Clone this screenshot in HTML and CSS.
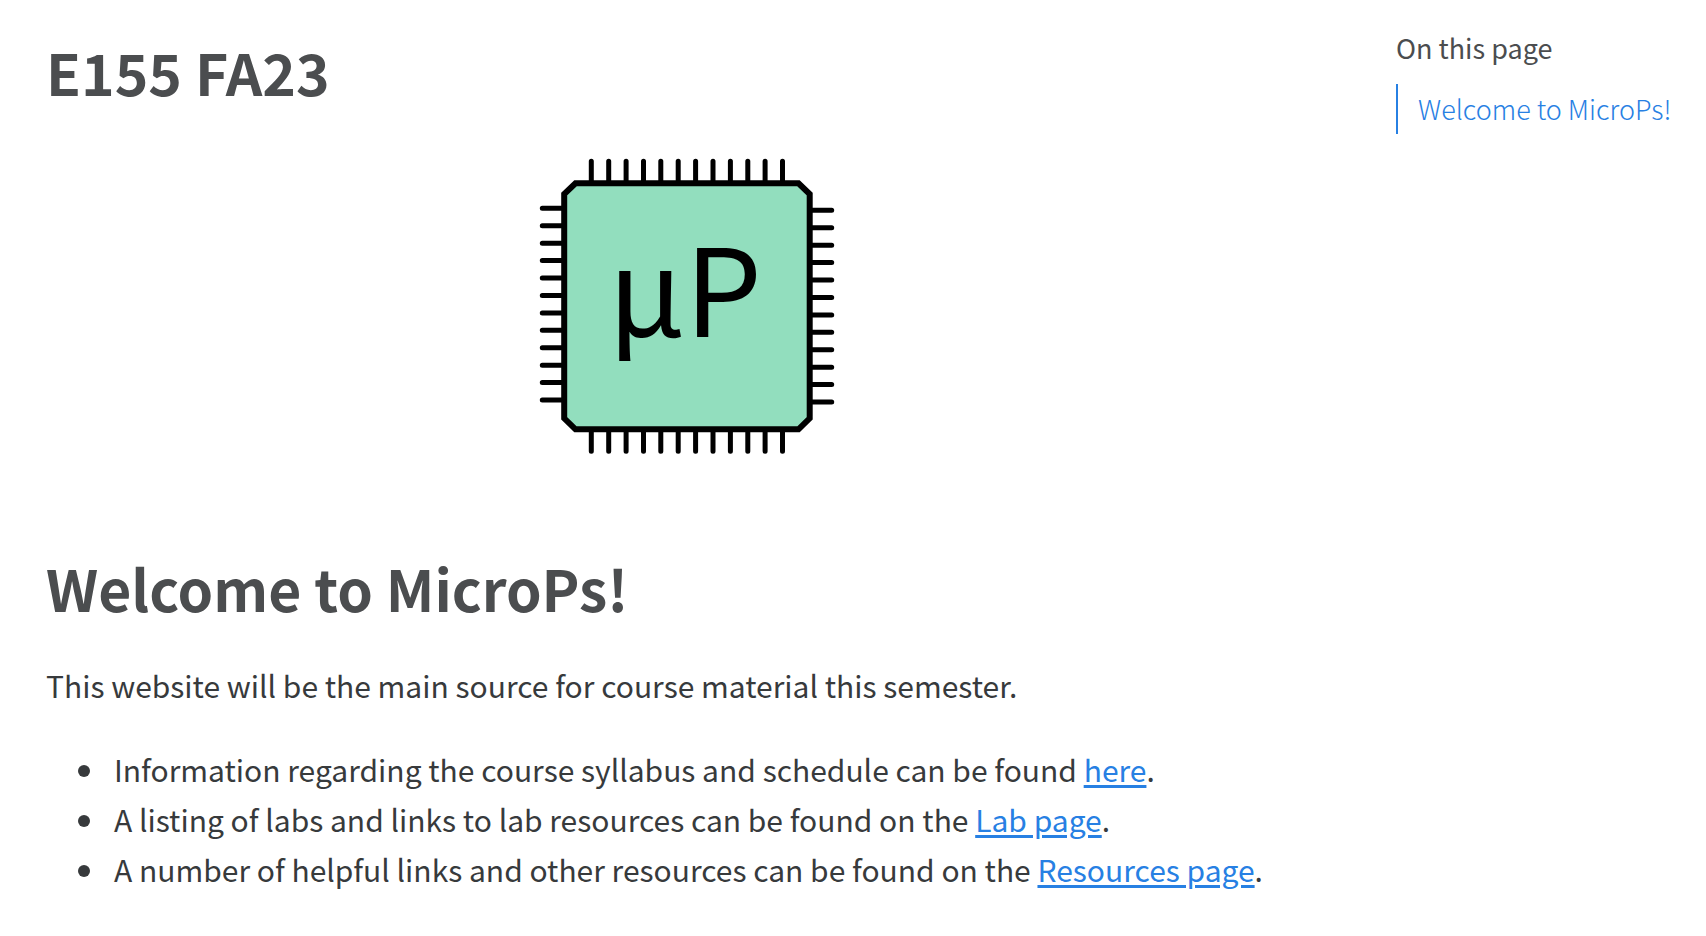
FILE: index.html
```
<!DOCTYPE html>
<html lang="en">
<head>
    <meta charset="UTF-8">
    <meta name="viewport" content="width=device-width, initial-scale=1.0">
    <title>E155 FA23</title>
    <link rel="stylesheet" href="styles.css">
</head>
<body>
    <div class="page">
        <main class="content">
            <h1 class="title">E155 FA23</h1>

            <svg class="logo" viewBox="0 0 300 300" role="img" aria-label="MicroPs logo">
                <g stroke="#000" stroke-width="5" stroke-linecap="round">
                    <!-- top and bottom pins -->
                    <path d="M54.3 5.3V27M71.7 5.3V27M89.1 5.3V27M106.5 5.3V27M123.8 5.3V27M141.2 5.3V27M158.6 5.3V27M176 5.3V27M193.4 5.3V27M210.8 5.3V27M228.1 5.3V27M245.5 5.3V27"/>
                    <path d="M54.3 273V295.3M71.7 273V295.3M89.1 273V295.3M106.5 273V295.3M123.8 273V295.3M141.2 273V295.3M158.6 273V295.3M176 273V295.3M193.4 273V295.3M210.8 273V295.3M228.1 273V295.3M245.5 273V295.3"/>
                    <!-- left and right pins -->
                    <path d="M5.3 52.3H27M5.3 69.7H27M5.3 87.2H27M5.3 104.6H27M5.3 122H27M5.3 139.5H27M5.3 156.9H27M5.3 174.3H27M5.3 191.7H27M5.3 209.2H27M5.3 226.6H27M5.3 244H27"/>
                    <path d="M273 54.3H294.7M273 71.7H294.7M273 89.2H294.7M273 106.6H294.7M273 124H294.7M273 141.5H294.7M273 158.9H294.7M273 176.3H294.7M273 193.7H294.7M273 211.2H294.7M273 228.6H294.7M273 246H294.7"/>
                </g>
                <path d="M38.5 27.3H261.5L272.7 38V262.3L261.5 273.3H38.5L27.2 262.3V38Z" fill="#92debe" stroke="#000" stroke-width="6"/>
                <text class="logo-text" x="148" y="181" text-anchor="middle">µP</text>
            </svg>

            <h1 id="welcome-to-microps">Welcome to MicroPs!</h1>
            <p>This website will be the main source for course material this semester.</p>
            <ul>
                <li>Information regarding the course syllabus and schedule can be found <a href="#">here</a>.</li>
                <li>A listing of labs and links to lab resources can be found on the <a href="#">Lab page</a>.</li>
                <li>A number of helpful links and other resources can be found on the <a href="#">Resources page</a>.</li>
            </ul>
        </main>

        <nav class="toc">
            <h2>On this page</h2>
            <a class="active" href="#welcome-to-microps">Welcome to MicroPs!</a>
        </nav>
    </div>
</body>
</html>
```
FILE: styles.css
```
body {
    margin: 0;
    background: #fff;
    color: #373a3c;
    font-family: "Source Sans Pro", "Noto Sans CJK SC", sans-serif;
    font-size: 30px;
    line-height: 50px;
}
.page {
    display: grid;
    grid-template-columns: 1fr 280px;
    column-gap: 68px;
    padding: 23px 30px 0 46px;
}
h1 {
    margin: 0;
    color: #4b4d4f;
    font-size: 57px;
    font-weight: 700;
    line-height: 76px;
}
.title {
    margin-top: 10px;
}
.logo {
    display: block;
    width: 300px;
    height: 300px;
    margin: 47px auto 93px;
}
.logo-text {
    font-size: 122px;
}
p {
    margin: 35px 0 34px;
}
ul {
    margin: 0;
    padding-left: 62px;
}
li {
    padding-left: 6px;
}
a {
    color: #2780e3;
    text-underline-offset: 3px;
    text-decoration-thickness: 3px;
}
.toc {
    font-size: 27px;
}
.toc h2 {
    margin: 0 0 11px;
    color: #4b4d4f;
    font-size: 27px;
    font-weight: 400;
}
.toc a {
    display: block;
    padding-left: 20px;
    border-left: 2px solid #2780e3;
    font-weight: 300;
    text-decoration: none;
    white-space: nowrap;
}
```
